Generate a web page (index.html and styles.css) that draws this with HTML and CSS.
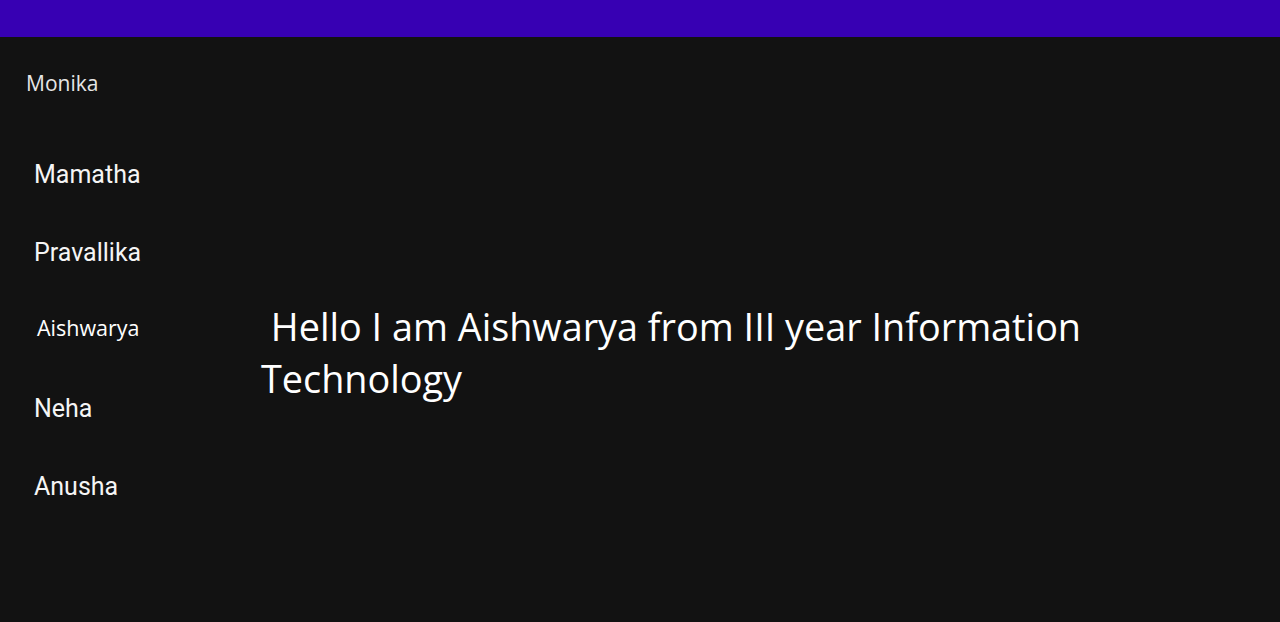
FILE: index.html
```html
<!DOCTYPE html>
<html>
<head>
<meta charset="utf-8">
<link rel="stylesheet" href="styles.css">
</head>
<body>
<header class="topbar"></header>
<div class="layout">
  <nav class="sidebar">
    <div class="title">Monika</div>
    <ul class="menu">
      <li class="item">Mamatha</li>
      <li class="item">Pravallika</li>
      <li class="item alt">Aishwarya</li>
      <li class="item">Neha</li>
      <li class="item">Anusha</li>
    </ul>
  </nav>
  <main class="content">
    <p class="intro">&nbsp;Hello I am Aishwarya from III year Information Technology</p>
  </main>
</div>
</body>
</html>
```

FILE: styles.css
```css
html, body {
  margin: 0;
  padding: 0;
  background: #121212;
  height: 100%;
  overflow: hidden;
}
body {
  color: #ffffff;
  font-family: "Open Sans", "Noto Sans", sans-serif;
}
.topbar {
  height: 37px;
  background: #3700b3;
}
.layout {
  display: flex;
}
.sidebar {
  width: 261px;
  flex: none;
}
.title {
  padding: 33px 0 0 26px;
  font-family: "Open Sans", sans-serif;
  font-size: 21px;
  line-height: 26px;
  color: #e6e6e6;
}
.menu {
  list-style: none;
  margin: 0;
  padding: 66px 0 0 34px;
  display: flex;
  flex-direction: column;
}
.item {
  font-family: Roboto, sans-serif;
  font-size: 25px;
  height: 78px;
  line-height: 26px;
  color: #f5f5f5;
}
.alt {
  font-family: "Open Sans", sans-serif;
  font-size: 21.5px;
  line-height: 20px;
  padding-left: 3px;
  color: #ffffff;
}
.content {
  flex: 1;
  padding-top: 264px;
  padding-right: 180px;
}
.intro {
  margin: 0;
  font-size: 37.8px;
  line-height: 52px;
  color: #ffffff;
}
```
